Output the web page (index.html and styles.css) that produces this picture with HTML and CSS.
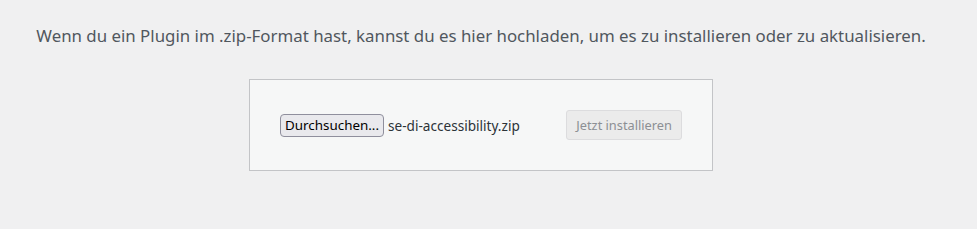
FILE: index.html
```html
<!DOCTYPE html>
<html>
<head>
  <title>Plugin hochladen</title>
  <link rel="stylesheet" href="styles.css">
</head>
<body>

<div class="upload-plugin">
  <p class="install-help">Wenn du ein Plugin im .zip-Format hast, kannst du es hier hochladen, um es zu installieren oder zu aktualisieren.</p>
  <form class="wp-upload-form">
    <div class="file-input">
      <button type="button" class="browse">Durchsuchen...</button>
      <span class="file-name">se-di-accessibility.zip</span>
    </div>
    <button type="button" class="install" disabled>Jetzt installieren</button>
  </form>
</div>

</body>
</html>
```

FILE: styles.css
```css
body { margin: 0; background: #f0f0f1; font-family: "Noto Sans", sans-serif; }
.upload-plugin { width: 962px; text-align: center; }
.install-help { margin: 0; padding-top: 24px; font-size: 16.85px; line-height: 24px; color: #50575e; }
.wp-upload-form { display: inline-flex; justify-content: space-between; align-items: center; box-sizing: border-box; width: 464px; margin-top: 31px; padding: 30px; background: #f6f7f7; border: 1px solid #c3c4c7; }
.file-input { display: flex; align-items: center; }
.browse { font-family: "Noto Sans", sans-serif; font-size: 13.4px; color: #000; background: #e9e9ed; border: 1px solid #8f8f9d; border-radius: 4px; padding: 1px 4px; height: 23px; line-height: 18px; }
.file-name { margin-left: 4px; font-size: 13.6px; color: #2c3338; }
.install { font-family: "Noto Sans", sans-serif; font-size: 12.8px; color: #8c8f94; background: #ebebeb; border: 1px solid #dcdcde; border-radius: 3px; height: 30px; padding: 0 9px; }
```
